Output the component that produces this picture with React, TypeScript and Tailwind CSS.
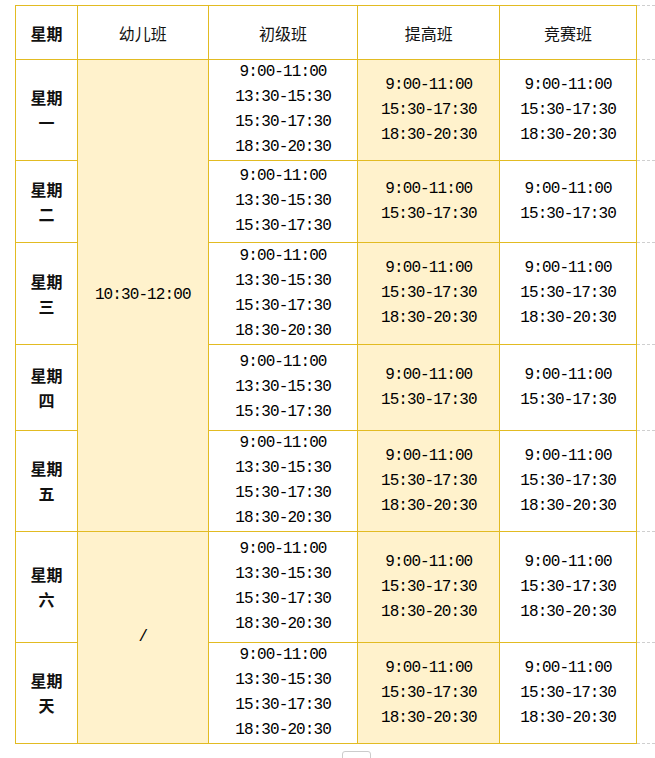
const days = ['一', '二', '三', '四', '五', '六', '天']
const heights = [101, 82, 102, 86, 101, 111, 101]
const full = ['9:00-11:00', '13:30-15:30', '15:30-17:30', '18:30-20:30']
const short = ['9:00-11:00', '13:30-15:30', '15:30-17:30']
const adv = ['9:00-11:00', '15:30-17:30', '18:30-20:30']
const advShort = ['9:00-11:00', '15:30-17:30']

// separate borders so the outer edge keeps its yellow
const cell = 'border-r border-b border-solid border-[#e2bb22] text-center align-middle p-0'
const time = "font-['Liberation_Mono',monospace] text-[16px] tracking-[-0.9px] leading-[25px] text-black"
const cjk = "font-['Noto_Sans_CJK_SC',sans-serif] text-[16px] text-[#111]"

function Lines({ items }: { items: string[] }) {
  return (
    <div className={time}>
      {items.map((t, i) => (
        <div key={i}>{t}</div>
      ))}
    </div>
  )
}

export default function App() {
  return (
    <div className="min-h-[758px] bg-white pt-[5px] pl-[15px]">
      <table className="table-fixed border-separate border-spacing-0">
        <colgroup>
          <col className="w-[63px]" />
          <col className="w-[131px]" />
          <col className="w-[150px]" />
          <col className="w-[142px]" />
          <col className="w-[137px]" />
          <col className="w-[18px]" />
        </colgroup>
        <thead>
          <tr className="h-[55px]">
            <th className={`${cell} ${cjk} border-l border-t font-bold`}>星期</th>
            <th className={`${cell} ${cjk} border-t font-normal`}>幼儿班</th>
            <th className={`${cell} ${cjk} border-t font-normal`}>初级班</th>
            <th className={`${cell} ${cjk} border-t font-normal`}>提高班</th>
            <th className={`${cell} ${cjk} border-t font-normal`}>竞赛班</th>
            <th className="border-y border-dashed border-[#cfcfcf] p-0"></th>
          </tr>
        </thead>
        <tbody>
          {days.map((d, i) => {
            const isShort = i === 1 || i === 3
            return (
              <tr key={d} style={{ height: heights[i] }}>
                <td className={`${cell} ${cjk} border-l font-bold leading-[25px]`}>
                  <div>星期</div>
                  <div>{d}</div>
                </td>
                {i === 0 && (
                  <td rowSpan={5} className={`${cell} bg-[#fff2cc]`}>
                    <div className={time}>10:30-12:00</div>
                  </td>
                )}
                {i === 5 && (
                  <td rowSpan={2} className={`${cell} bg-[#fff2cc]`}>
                    <div className={time}>/</div>
                  </td>
                )}
                <td className={cell}>
                  <Lines items={isShort ? short : full} />
                </td>
                <td className={`${cell} bg-[#fff2cc]`}>
                  <Lines items={isShort ? advShort : adv} />
                </td>
                <td className={cell}>
                  <Lines items={isShort ? advShort : adv} />
                </td>
                <td className="border-b border-dashed border-[#cfcfcf] p-0"></td>
              </tr>
            )
          })}
        </tbody>
      </table>
      <div className="mt-[7px] ml-[327px] h-[12px] w-[29px] rounded-[3px] border border-[#cccccc]" />
    </div>
  )
}
